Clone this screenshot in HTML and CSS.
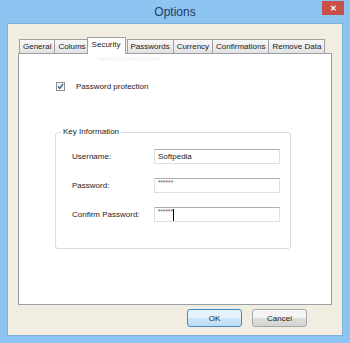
FILE: index.html
```
<!DOCTYPE html>
<html lang="en">
<head>
    <meta charset="UTF-8">
    <title>Options</title>
    <link rel="stylesheet" href="styles.css">
</head>
<body>
    <div class="window">
        <div class="titlebar">
            <span class="title">Options</span>
            <span class="close">&#x2715;</span>
        </div>
        <div class="client">
            <div class="tabs">
                <span class="tab">General</span>
                <span class="tab">Colums</span>
                <span class="tab active">Security</span>
                <span class="tab">Passwords</span>
                <span class="tab">Currency</span>
                <span class="tab">Confirmations</span>
                <span class="tab">Remove Data</span>
            </div>
            <div class="panel">
                <span class="watermark">www.softpedia.com</span>
                <label class="check-row">
                    <span class="checkbox">
                        <svg width="7" height="7" viewBox="0 0 7 7"><path d="M1 3.5 L2.8 5.5 L6 1" fill="none" stroke="#3d5a99" stroke-width="1.3"/></svg>
                    </span>
                    Password protection
                </label>
                <fieldset class="group">
                    <legend>Key Information</legend>
                    <div class="form-grid">
                        <span class="label">Username:</span>
                        <div class="field">Softpedia</div>
                        <span class="label">Password:</span>
                        <div class="field mask">******</div>
                        <span class="label">Confirm Password:</span>
                        <div class="field mask">******<span class="caret"></span></div>
                    </div>
                </fieldset>
            </div>
            <div class="buttons">
                <button class="btn default">OK</button>
                <button class="btn">Cancel</button>
            </div>
        </div>
    </div>
</body>
</html>
```

FILE: styles.css
```
body {
    margin: 0;
    font-family: "Liberation Sans", Arial, sans-serif;
    font-size: 8px;
    color: #1a1a1a;
}
.window {
    width: 350px;
    height: 343px;
    background: #8dc4f1;
    padding: 0 7px 7px 7px;
    box-sizing: border-box;
    display: flex;
    flex-direction: column;
}
.titlebar {
    height: 23px;
    position: relative;
    display: flex;
    align-items: center;
    justify-content: center;
}
.title {
    font-size: 12px;
    color: #1f3a5c;
    margin-top: 1px;
}
.close {
    position: absolute;
    right: -1px;
    top: 1px;
    width: 22px;
    height: 14px;
    background: #c94f4a;
    color: white;
    font-size: 8px;
    font-weight: bold;
    display: flex;
    align-items: center;
    justify-content: center;
}
.client {
    flex: 1;
    background: #f1ede1;
    border: 1px solid #7fb0d8;
    padding: 0 10px 0 10px;
    display: flex;
    flex-direction: column;
}
.tabs {
    display: flex;
    align-items: flex-end;
    margin-top: 13px;
    padding-left: 1px;
    height: 16px;
    position: relative;
    z-index: 1;
}
.tab {
    height: 13px;
    padding: 0 3px;
    border: 1px solid #a0a0a0;
    border-bottom: none;
    margin-right: -1px;
    background: linear-gradient(#f8f8f8, #e2e2e2);
    line-height: 14px;
    font-size: 8px;
    color: #222;
}
.tab.active {
    height: 16px;
    line-height: 13px;
    background: #fff;
    padding: 0 4px;
    margin: 0 1px 0 -2px;
    position: relative;
    top: 1px;
}
.panel {
    height: 252px;
    background: #fff;
    border: 1px solid #9a9fa4;
    box-sizing: border-box;
    position: relative;
    padding: 28px 0 0 37px;
}
.watermark {
    position: absolute;
    left: 80px;
    top: 1px;
    color: #f0f0f0;
    font-size: 7px;
}
.check-row {
    display: flex;
    align-items: center;
    gap: 11px;
    height: 9px;
    font-size: 8px;
}
.checkbox {
    width: 7px;
    height: 7px;
    border: 1px solid #8f8f8f;
    background: linear-gradient(#f0f0f0, #fff);
    display: flex;
    align-items: center;
    justify-content: center;
}
.group {
    margin: 37px 0 0 -1px;
    width: 236px;
    box-sizing: border-box;
    border: 1px solid #d6dce2;
    border-radius: 3px;
    padding: 13px 0 26px 16px;
}
.group legend {
    padding: 0 2px;
    margin-left: -11px;
    line-height: 8px;
    font-size: 8px;
}
.form-grid {
    display: grid;
    grid-template-columns: 82px 126px;
    grid-auto-rows: 15px;
    row-gap: 14px;
    align-items: center;
}
.label {
    font-size: 8px;
}
.field {
    height: 15px;
    box-sizing: border-box;
    border: 1px solid #dbdfe6;
    border-top-color: #acaeb4;
    padding: 0 3px;
    line-height: 13px;
    font-size: 8px;
    display: flex;
    align-items: center;
}
.field.mask {
    font-size: 6.5px;
    align-items: flex-start;
    line-height: 8px;
    color: #555;
}
.caret {
    display: inline-block;
    width: 1px;
    height: 12px;
    background: #000;
    margin-left: 0;
    margin-top: 1px;
}
.buttons {
    display: flex;
    justify-content: flex-end;
    gap: 10px;
    margin-top: 4px;
    padding-right: 25px;
}
.btn {
    width: 55px;
    height: 18px;
    font-family: "Liberation Sans", Arial, sans-serif;
    font-size: 8px;
    color: #1a1a1a;
    border: 1px solid #a8a8a8;
    border-radius: 3px;
    background: linear-gradient(#f4f4f4 50%, #dedede 50%, #d4d4d4);
    padding: 0;
}
.btn.default {
    border-color: #3f8cc7;
    background: linear-gradient(#e7f3fc 50%, #cce6fa 50%, #bcdcf5);
}
```
